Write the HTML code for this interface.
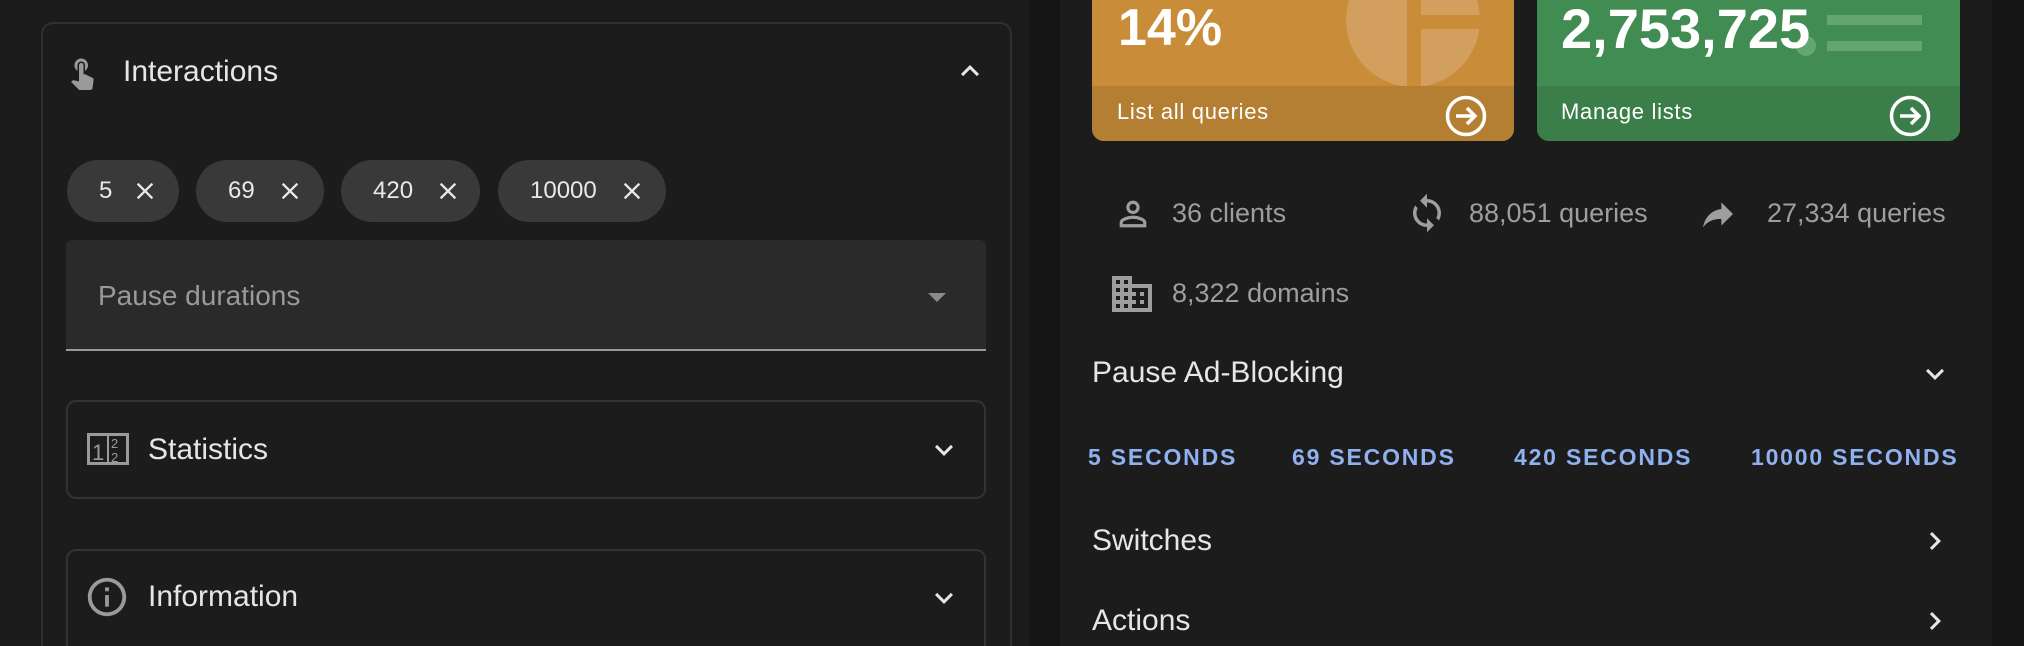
<!DOCTYPE html>
<html style="width:2024px;height:646px;overflow:hidden"><head><meta charset="utf-8"><style>
*{margin:0;padding:0;box-sizing:border-box}
body{width:2024px;height:646px;overflow:hidden;background:#1b1b1b;font-family:"Liberation Sans",sans-serif;position:relative;color:#e6e6e6}
.a{position:absolute}
svg{position:absolute;display:block}
.chip{position:absolute;top:160px;height:62px;border-radius:31px;background:#393939;color:#e8e8e8;font-size:24px;line-height:62px}
.chip span{position:absolute;left:32px}
.card{position:absolute;border:2px solid #333;border-radius:10px}
.t{position:absolute;font-size:29px;color:#e6e6e6;line-height:1}
.st{position:absolute;font-size:27px;color:#9e9e9e;line-height:1}
.sec{position:absolute;top:446px;font-size:23px;color:#8fb1ef;letter-spacing:1.8px;font-weight:bold;line-height:1}
</style></head><body>
<div class="a" style="left:41px;top:22px;width:971px;height:624px;border:2px solid #303030;border-bottom:none;border-radius:12px 12px 0 0;background:#1c1c1c"></div>
<svg style="left:64px;top:54px" width="36" height="36" viewBox="0 0 24 24"><path fill="#9a9a9a" d="M9 11.24V7.5C9 6.12 10.12 5 11.5 5S14 6.12 14 7.5v3.74c1.21-.81 2-2.18 2-3.74C16 5.01 13.99 3 11.5 3S7 5.01 7 7.5c0 1.56.79 2.93 2 3.74zm9.84 4.63l-4.54-2.26c-.17-.07-.35-.11-.54-.11H13v-6c0-.83-.67-1.5-1.5-1.5S10 6.67 10 7.5v10.74l-3.43-.72c-.08-.01-.15-.03-.24-.03-.31 0-.59.13-.79.33l-.79.8 4.94 4.94c.27.27.65.44 1.06.44h6.79c.75 0 1.33-.55 1.44-1.28l.75-5.27c.01-.07.02-.14.02-.2 0-.62-.38-1.16-.91-1.38z"/></svg>
<div class="t" style="left:123px;top:57px;font-size:30px">Interactions</div>
<svg style="left:952px;top:53px" width="36" height="36" viewBox="0 0 24 24"><path fill="#e6e6e6" d="M12 8l-6 6 1.41 1.41L12 10.83l4.59 4.58L18 14z"/></svg>

<div class="chip" style="left:67px;width:112px"><span>5</span></div>
<div class="chip" style="left:196px;width:128px"><span>69</span></div>
<div class="chip" style="left:341px;width:139px"><span>420</span></div>
<div class="chip" style="left:498px;width:168px"><span>10000</span></div>
<svg style="left:131px;top:177px" width="28" height="28" viewBox="0 0 24 24"><path fill="#e8e8e8" d="M19 6.41L17.59 5 12 10.59 6.41 5 5 6.41 10.59 12 5 17.59 6.41 19 12 13.41 17.59 19 19 17.59 13.41 12z"/></svg>
<svg style="left:276px;top:177px" width="28" height="28" viewBox="0 0 24 24"><path fill="#e8e8e8" d="M19 6.41L17.59 5 12 10.59 6.41 5 5 6.41 10.59 12 5 17.59 6.41 19 12 13.41 17.59 19 19 17.59 13.41 12z"/></svg>
<svg style="left:434px;top:177px" width="28" height="28" viewBox="0 0 24 24"><path fill="#e8e8e8" d="M19 6.41L17.59 5 12 10.59 6.41 5 5 6.41 10.59 12 5 17.59 6.41 19 12 13.41 17.59 19 19 17.59 13.41 12z"/></svg>
<svg style="left:618px;top:177px" width="28" height="28" viewBox="0 0 24 24"><path fill="#e8e8e8" d="M19 6.41L17.59 5 12 10.59 6.41 5 5 6.41 10.59 12 5 17.59 6.41 19 12 13.41 17.59 19 19 17.59 13.41 12z"/></svg>

<div class="a" style="left:66px;top:240px;width:920px;height:111px;background:#2a2a2a;border-radius:6px 6px 0 0;border-bottom:2px solid #9a9a9a"></div>
<div class="a" style="left:98px;top:282px;font-size:28px;color:#9a9a9a;line-height:1">Pause durations</div>
<div class="a" style="left:928px;top:293px;width:0;height:0;border-left:9px solid transparent;border-right:9px solid transparent;border-top:9px solid #8a8a8a"></div>

<div class="card" style="left:66px;top:400px;width:920px;height:99px"></div>
<svg style="left:87px;top:433px" width="42" height="32" viewBox="0 0 42 32"><rect x="1.5" y="1.5" width="39" height="29" fill="none" stroke="#9a9a9a" stroke-width="3"/><line x1="21" y1="2" x2="21" y2="30" stroke="#9a9a9a" stroke-width="2"/><text x="5" y="27" font-family="Liberation Sans" font-size="22" fill="#9a9a9a">1</text><text x="24" y="15" font-family="Liberation Sans" font-size="13" fill="#9a9a9a">2</text><text x="24" y="29" font-family="Liberation Sans" font-size="13" fill="#9a9a9a">2</text></svg>
<div class="t" style="left:148px;top:435px;font-size:30px">Statistics</div>
<svg style="left:926px;top:432px" width="36" height="36" viewBox="0 0 24 24"><path fill="#e6e6e6" d="M16.59 8.59L12 13.17 7.41 8.59 6 10l6 6 6-6z"/></svg>

<div class="card" style="left:66px;top:549px;width:920px;height:97px;border-bottom:none;border-radius:10px 10px 0 0"></div>
<svg style="left:84px;top:574px" width="46" height="46" viewBox="0 0 24 24"><path fill="#9a9a9a" d="M11 7h2v2h-2zm0 4h2v6h-2zm1-9C6.48 2 2 6.48 2 12s4.48 10 10 10 10-4.48 10-10S17.52 2 12 2zm0 18c-4.41 0-8-3.59-8-8s3.59-8 8-8 8 3.59 8 8-3.59 8-8 8z"/></svg>
<div class="t" style="left:148px;top:582px;font-size:30px">Information</div>
<svg style="left:926px;top:580px" width="36" height="36" viewBox="0 0 24 24"><path fill="#e6e6e6" d="M16.59 8.59L12 13.17 7.41 8.59 6 10l6 6 6-6z"/></svg>

<div class="a" style="left:1030px;top:0;width:30px;height:646px;background:#151515"></div>
<div class="a" style="left:1060px;top:0;width:932px;height:646px;background:#1c1c1c"></div>
<div class="a" style="left:1992px;top:0;width:32px;height:646px;background:#151515"></div>

<div class="a" style="left:1092px;top:0;width:422px;height:141px;border-radius:0 0 12px 12px;background:#c98c38;overflow:hidden">
 <svg style="left:0;top:0" width="422" height="141"><circle cx="321" cy="20" r="67" fill="#d39f5f"/><rect x="315" y="0" width="14" height="100" fill="#c98c38"/><rect x="329" y="15" width="100" height="14" fill="#c98c38"/><rect x="0" y="86" width="422" height="55" fill="#b57f33"/></svg>
 <div class="a" style="left:26px;top:2px;font-size:52px;font-weight:bold;color:#fff;line-height:1">14%</div>
 <div class="a" style="left:25px;top:101px;font-size:22px;color:#fff;letter-spacing:.7px;line-height:1">List all queries</div>
 <svg style="left:352px;top:94px" width="44" height="44" viewBox="0 0 44 44"><circle cx="22" cy="22" r="18.5" fill="none" stroke="#fff" stroke-width="3.5"/><path d="M12 22h19M23 14l8 8-8 8" fill="none" stroke="#fff" stroke-width="3.5"/></svg>
</div>

<div class="a" style="left:1537px;top:0;width:423px;height:141px;border-radius:0 0 12px 12px;background:#418c52;overflow:hidden">
 <svg style="left:0;top:0" width="423" height="141"><rect x="290" y="15" width="95" height="10" fill="#65a574"/><rect x="290" y="41" width="95" height="10" fill="#65a574"/><circle cx="269" cy="46" r="10" fill="#65a574"/><rect x="0" y="86" width="423" height="55" fill="#3b7e4a"/></svg>
 <div class="a" style="left:24px;top:1px;font-size:56px;font-weight:bold;color:#fff;line-height:1">2,753,725</div>
 <div class="a" style="left:24px;top:101px;font-size:22px;color:#fff;letter-spacing:.7px;line-height:1">Manage lists</div>
 <svg style="left:351px;top:94px" width="44" height="44" viewBox="0 0 44 44"><circle cx="22" cy="22" r="18.5" fill="none" stroke="#fff" stroke-width="3.5"/><path d="M12 22h19M23 14l8 8-8 8" fill="none" stroke="#fff" stroke-width="3.5"/></svg>
</div>

<svg style="left:1113px;top:194px" width="40" height="40" viewBox="0 0 24 24"><path fill="#9e9e9e" d="M12 5.9c1.16 0 2.1.94 2.1 2.1s-.94 2.1-2.1 2.1S9.9 9.16 9.9 8s.94-2.1 2.1-2.1m0 9c2.97 0 6.1 1.46 6.1 2.1v1.1H5.9V17c0-.64 3.13-2.1 6.1-2.1M12 4C9.79 4 8 5.79 8 8s1.79 4 4 4 4-1.79 4-4-1.79-4-4-4zm0 9c-2.67 0-8 1.34-8 4v3h16v-3c0-2.66-5.33-4-8-4z"/></svg>
<div class="st" style="left:1172px;top:200px">36 clients</div>
<svg style="left:1406px;top:192px" width="42" height="42" viewBox="0 0 24 24"><path fill="#9e9e9e" d="M12 4V1L8 5l4 4V6c3.31 0 6 2.69 6 6 0 1.01-.25 1.97-.7 2.8l1.46 1.46C19.54 15.03 20 13.57 20 12c0-4.42-3.58-8-8-8zm0 14c-3.31 0-6-2.69-6-6 0-1.01.25-1.97.7-2.8L5.24 7.74C4.46 8.97 4 10.43 4 12c0 4.42 3.58 8 8 8v3l4-4-4-4v3z"/></svg>
<div class="st" style="left:1469px;top:200px">88,051 queries</div>
<svg style="left:1698px;top:194px" width="40" height="40" viewBox="0 0 24 24"><path fill="#9e9e9e" d="M14 9V5l7 7-7 7v-4.1c-5 0-8.5 1.6-11 5.1 1-5 4-10 11-11z"/></svg>
<div class="st" style="left:1767px;top:200px">27,334 queries</div>
<svg style="left:1108px;top:270px" width="48" height="48" viewBox="0 0 24 24"><path fill="#9e9e9e" d="M12 7V3H2v18h20V7H12zM6 19H4v-2h2v2zm0-4H4v-2h2v2zm0-4H4V9h2v2zm0-4H4V5h2v2zm4 12H8v-2h2v2zm0-4H8v-2h2v2zm0-4H8V9h2v2zm0-4H8V5h2v2zm10 12h-8v-2h2v-2h-2v-2h2v-2h-2V9h8v10zm-2-8h-2v2h2v-2zm0 4h-2v2h2v-2z"/></svg>
<div class="st" style="left:1172px;top:280px">8,322 domains</div>

<div class="t" style="left:1092px;top:358px;font-size:30px">Pause Ad-Blocking</div>
<svg style="left:1917px;top:356px" width="36" height="36" viewBox="0 0 24 24"><path fill="#e6e6e6" d="M16.59 8.59L12 13.17 7.41 8.59 6 10l6 6 6-6z"/></svg>

<div class="sec" style="left:1088px">5 SECONDS</div>
<div class="sec" style="left:1292px">69 SECONDS</div>
<div class="sec" style="left:1514px">420 SECONDS</div>
<div class="sec" style="left:1751px">10000 SECONDS</div>

<div class="t" style="left:1092px;top:526px;font-size:30px">Switches</div>
<svg style="left:1917px;top:523px" width="36" height="36" viewBox="0 0 24 24"><path fill="#e6e6e6" d="M10 6L8.59 7.41 13.17 12l-4.58 4.59L10 18l6-6z"/></svg>
<div class="t" style="left:1092px;top:606px;font-size:30px">Actions</div>
<svg style="left:1917px;top:603px" width="36" height="36" viewBox="0 0 24 24"><path fill="#e6e6e6" d="M10 6L8.59 7.41 13.17 12l-4.58 4.59L10 18l6-6z"/></svg>
</body></html>
